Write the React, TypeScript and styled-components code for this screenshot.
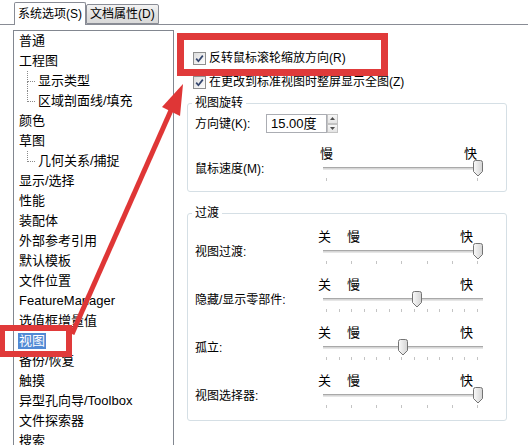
import React from "react";
import styled, { createGlobalStyle } from "styled-components";

const GlobalStyle = createGlobalStyle`
  html, body {
    margin: 0;
    padding: 0;
    background: #fff;
  }
`;

const Root = styled.div`
  position: relative;
  width: 528px;
  height: 445px;
  overflow: hidden;
  background: #fff;
  color: #000;
  font: 13px/16px "Liberation Sans", "Noto Sans CJK SC", sans-serif;
`;

const TabBar = styled.div`
  display: flex;
  align-items: flex-end;
  height: 25px;
  box-sizing: border-box;
  padding-left: 14px;
  border-bottom: 1px solid #898c95;
  font-size: 12px;
`;

const Tab = styled.div<{ $active?: boolean }>`
  box-sizing: border-box;
  height: ${(p) => (p.$active ? "23px" : "20px")};
  margin-bottom: ${(p) => (p.$active ? "-1px" : "0")};
  padding: 0 3px;
  display: flex;
  align-items: center;
  border: 1px solid #898c95;
  border-bottom: ${(p) => (p.$active ? "none" : "1px solid #898c95")};
  border-radius: 2px 2px 0 0;
  background: ${(p) =>
    p.$active ? "#fff" : "linear-gradient(#f3f3f3, #e3e3e3 50%, #d9d9d9)"};
  white-space: nowrap;
`;

const Main = styled.div`
  display: flex;
  padding-left: 13px;
  margin-top: 5px;
`;

const Tree = styled.div`
  flex-shrink: 0;
  width: 161px;
  height: 430px;
  box-sizing: border-box;
  border: 1px solid #828790;
  border-bottom: none;
  padding-left: 5px;
`;

const TreeRow = styled.div`
  display: flex;
  height: 20px;
  align-items: center;
  white-space: nowrap;
`;

const Connector = styled.div`
  display: flex;
  flex-direction: column;
  align-self: stretch;
  width: 8px;
  margin-left: 8px;
  margin-right: 3px;
`;

const ConnectorHalf = styled.div<{ $line: boolean; $elbow?: boolean }>`
  flex: 1;
  border-left: ${(p) => (p.$line ? "1px dotted #8a8a8a" : "1px solid transparent")};
  border-bottom: ${(p) => (p.$elbow ? "1px dotted #8a8a8a" : "none")};
`;

const Selected = styled.span`
  background: #5189d4;
  color: #fff;
  padding: 0 1px;
  margin-left: -1px;
`;

const RightPane = styled.div`
  flex: 1;
  padding: 17px 0 0 13px;
  font-size: 12px;
`;

const CheckRow = styled.div<{ $gap?: number }>`
  display: flex;
  align-items: center;
  height: 22px;
  gap: 3px;
  padding-left: 6px;
  margin-top: ${(p) => p.$gap ?? 0}px;
  white-space: nowrap;
`;

const Box = styled.span`
  display: inline-flex;
  width: 13px;
  height: 13px;
  box-sizing: border-box;
  border: 1px solid #8e8f8f;
  background: linear-gradient(135deg, #dcdcdc, #fdfdfd);
`;

const Group = styled.fieldset<{ $gap: number }>`
  width: 320px;
  box-sizing: border-box;
  margin: ${(p) => p.$gap}px 0 0 0;
  padding: 0 8px ${(p) => (p.$gap > 5 ? 12 : 10)}px 7px;
  border: 1px solid #d5dfe5;
  border-radius: 3px;
`;

const Legend = styled.legend`
  padding: 0 3px;
  margin-left: -3px;
  line-height: 16px;
`;

const SpinRow = styled.div`
  display: flex;
  align-items: center;
  height: 21px;
  margin-top: 2px;
`;

const SpinLabel = styled.span`
  width: 71px;
`;

const SpinInput = styled.div`
  width: 61px;
  height: 19px;
  box-sizing: border-box;
  border: 1px solid #abadb3;
  padding-left: 4px;
  display: flex;
  align-items: center;
  font-size: 13px;
`;

const SpinButtons = styled.div`
  display: flex;
  flex-direction: column;
  height: 19px;
  width: 11px;
`;

const SpinBtn = styled.div`
  flex: 1;
  box-sizing: border-box;
  border: 1px solid #c3c3c3;
  background: linear-gradient(#f7f7f7, #e4e4e4);
  display: flex;
  align-items: center;
  justify-content: center;
`;

const SliderRow = styled.div<{ $gap: number }>`
  display: grid;
  grid-template-columns: 128px 160px;
  align-items: end;
  margin-top: ${(p) => p.$gap}px;
`;

const RowLabel = styled.span`
  margin-bottom: 4px;
  white-space: nowrap;
`;

const Scale = styled.div`
  display: flex;
  height: 14px;
  line-height: 14px;
  font-size: 13px;
`;

const ScaleText = styled.span<{ $left?: number; $right?: number; $push?: boolean }>`
  margin-left: ${(p) => (p.$push ? "auto" : `${p.$left ?? 0}px`)};
  margin-right: ${(p) => p.$right ?? 0}px;
`;

const TrackArea = styled.div`
  position: relative;
  height: 14px;
  display: flex;
  align-items: center;
`;

const TrackLine = styled.div`
  flex: 1;
  height: 3px;
  box-sizing: border-box;
  border-top: 1px solid #a9a9a9;
  border-bottom: 1px solid #e6e6e6;
  background: #d6d6d6;
`;

const Thumb = styled.svg`
  position: absolute;
  top: -1px;
`;

const Ticks = styled.div`
  display: flex;
  justify-content: space-between;
  height: 6px;
  padding: 3px 5px 0 3px;
  box-sizing: border-box;
`;

const Tick = styled.span`
  width: 1px;
  height: 3px;
  background: #c4c4c4;
`;

const Mark = styled.div<{ $x: number; $y: number; $w: number; $h: number; $b: number }>`
  position: absolute;
  left: ${(p) => p.$x}px;
  top: ${(p) => p.$y}px;
  width: ${(p) => p.$w}px;
  height: ${(p) => p.$h}px;
  box-sizing: border-box;
  border: ${(p) => p.$b}px solid #e03a3a;
  pointer-events: none;
`;

const Arrow = styled.svg`
  position: absolute;
  left: 0;
  top: 0;
  pointer-events: none;
`;

type TreeItem = { text: string; child?: boolean; last?: boolean; selected?: boolean };

const treeItems: TreeItem[] = [
  { text: "普通" },
  { text: "工程图" },
  { text: "显示类型", child: true },
  { text: "区域剖面线/填充", child: true, last: true },
  { text: "颜色" },
  { text: "草图" },
  { text: "几何关系/捕捉", child: true, last: true },
  { text: "显示/选择" },
  { text: "性能" },
  { text: "装配体" },
  { text: "外部参考引用" },
  { text: "默认模板" },
  { text: "文件位置" },
  { text: "FeatureManager" },
  { text: "选值框增量值" },
  { text: "视图", selected: true },
  { text: "备份/恢复" },
  { text: "触摸" },
  { text: "异型孔向导/Toolbox" },
  { text: "文件探索器" },
  { text: "搜索" },
];

const Check = () => (
  <Box>
    <svg width="11" height="11" viewBox="0 0 11 11">
      <path d="M2.2 5.6 L4.4 8.2 L8.8 2.6" fill="none" stroke="#34466e" strokeWidth="1.7" />
    </svg>
  </Box>
);

const SliderThumb = ({ value }: { value: number }) => (
  <Thumb width="10" height="17" viewBox="0 0 10 17" style={{ left: `${value * 150}px` }}>
    <defs>
      <linearGradient id="tg" x1="0" x2="1" y1="0" y2="0">
        <stop offset="0" stopColor="#fafafa" />
        <stop offset="1" stopColor="#d4d4d4" />
      </linearGradient>
    </defs>
    <path
      d="M0.5 2.5 Q0.5 0.5 2.5 0.5 H7.5 Q9.5 0.5 9.5 2.5 V11.5 L5 16 L0.5 11.5 Z"
      fill="url(#tg)"
      stroke="#747474"
    />
  </Thumb>
);

type SliderProps = {
  label: string;
  value: number;
  ticks: number;
  off?: string;
  gap: number;
};

const Slider = ({ label, value, ticks, off, gap }: SliderProps) => (
  <SliderRow $gap={gap}>
    <RowLabel>{label}</RowLabel>
    <div>
      {off ? (
        <Scale>
          <ScaleText $left={-5}>{off}</ScaleText>
          <ScaleText $left={16}>慢</ScaleText>
          <ScaleText $push $right={10}>快</ScaleText>
        </Scale>
      ) : (
        <Scale>
          <ScaleText $left={-3}>慢</ScaleText>
          <ScaleText $push $right={6}>快</ScaleText>
        </Scale>
      )}
      <TrackArea>
        <TrackLine />
        <SliderThumb value={value} />
      </TrackArea>
      <Ticks>
        {Array.from({ length: ticks }).map((_, i) => (
          <Tick key={i} />
        ))}
      </Ticks>
    </div>
  </SliderRow>
);

const TreeEntry = ({ item }: { item: TreeItem }) => (
  <TreeRow>
    {item.child && (
      <Connector>
        <ConnectorHalf $line $elbow />
        <ConnectorHalf $line={!item.last} />
      </Connector>
    )}
    {item.selected ? <Selected>{item.text}</Selected> : item.text}
  </TreeRow>
);

export default function App() {
  return (
    <Root>
      <GlobalStyle />
      <TabBar>
        <Tab $active>系统选项(S)</Tab>
        <Tab>文档属性(D)</Tab>
      </TabBar>
      <Main>
        <Tree>
          {treeItems.map((item) => (
            <TreeEntry key={item.text} item={item} />
          ))}
        </Tree>
        <RightPane>
          <CheckRow>
            <Check />
            反转鼠标滚轮缩放方向(R)
          </CheckRow>
          <CheckRow $gap={2}>
            <Check />
            在更改到标准视图时整屏显示全图(Z)
          </CheckRow>
          <Group $gap={2}>
            <Legend>视图旋转</Legend>
            <SpinRow>
              <SpinLabel>方向键(K):</SpinLabel>
              <SpinInput>15.00度</SpinInput>
              <SpinButtons>
                <SpinBtn>
                  <svg width="5" height="3" viewBox="0 0 5 3">
                    <path d="M0 3 L2.5 0 L5 3 Z" fill="#4d4d4d" />
                  </svg>
                </SpinBtn>
                <SpinBtn>
                  <svg width="5" height="3" viewBox="0 0 5 3">
                    <path d="M0 0 L2.5 3 L5 0 Z" fill="#4d4d4d" />
                  </svg>
                </SpinBtn>
              </SpinButtons>
            </SpinRow>
            <Slider label="鼠标速度(M):" value={1} ticks={2} gap={13} />
          </Group>
          <Group $gap={13}>
            <Legend>过渡</Legend>
            <Slider label="视图过渡:" value={1} ticks={7} off="关" gap={9} />
            <Slider label="隐藏/显示零部件:" value={0.59} ticks={13} off="关" gap={14} />
            <Slider label="孤立:" value={0.5} ticks={13} off="关" gap={14} />
            <Slider label="视图选择器:" value={1} ticks={7} off="关" gap={14} />
          </Group>
        </RightPane>
      </Main>

      <Mark $x={177} $y={33} $w={211} $h={43} $b={7} />
      <Mark $x={-1} $y={325} $w={73} $h={32} $b={6} />
      <Arrow width="528" height="445" viewBox="0 0 528 445">
        <line x1="72" y1="334" x2="172" y2="108" stroke="#df3636" strokeWidth="5" />
        <polygon points="183,84 180,116 162,107" fill="#df3636" />
      </Arrow>
    </Root>
  );
}
